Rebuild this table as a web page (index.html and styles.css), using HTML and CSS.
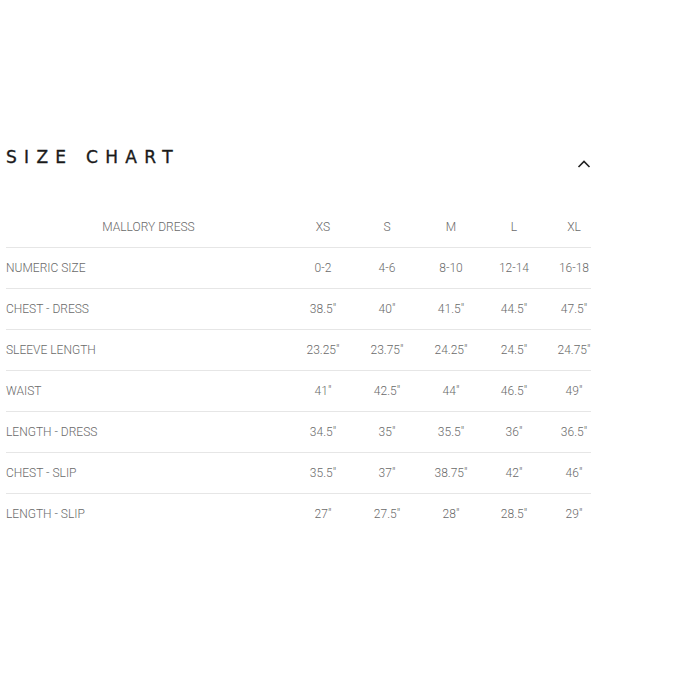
FILE: index.html
```html
<!DOCTYPE html>
<html>
<head>
<meta charset="utf-8">
<link rel="stylesheet" href="styles.css">
</head>
<body>
<div class="wrap">
  <div class="title-row">
    <h2 class="title">SIZE CHART</h2>
    <svg class="chev" width="14" height="9" viewBox="0 0 14 9"><polyline points="1.5,8 7,2.5 12.5,8" fill="none" stroke="#222" stroke-width="1.6"/></svg>
  </div>
  <div class="chart">
    <div class="row head">
      <div class="c name">MALLORY DRESS</div><div class="c">XS</div><div class="c">S</div><div class="c">M</div><div class="c">L</div><div class="c">XL</div>
    </div>
    <div class="row">
      <div class="c label">NUMERIC SIZE</div><div class="c">0-2</div><div class="c">4-6</div><div class="c">8-10</div><div class="c">12-14</div><div class="c">16-18</div>
    </div>
    <div class="row">
      <div class="c label">CHEST - DRESS</div><div class="c">38.5"</div><div class="c">40"</div><div class="c">41.5"</div><div class="c">44.5"</div><div class="c">47.5"</div>
    </div>
    <div class="row">
      <div class="c label">SLEEVE LENGTH</div><div class="c">23.25"</div><div class="c">23.75"</div><div class="c">24.25"</div><div class="c">24.5"</div><div class="c">24.75"</div>
    </div>
    <div class="row">
      <div class="c label">WAIST</div><div class="c">41"</div><div class="c">42.5"</div><div class="c">44"</div><div class="c">46.5"</div><div class="c">49"</div>
    </div>
    <div class="row">
      <div class="c label">LENGTH - DRESS</div><div class="c">34.5"</div><div class="c">35"</div><div class="c">35.5"</div><div class="c">36"</div><div class="c">36.5"</div>
    </div>
    <div class="row">
      <div class="c label">CHEST - SLIP</div><div class="c">35.5"</div><div class="c">37"</div><div class="c">38.75"</div><div class="c">42"</div><div class="c">46"</div>
    </div>
    <div class="row last">
      <div class="c label">LENGTH - SLIP</div><div class="c">27"</div><div class="c">27.5"</div><div class="c">28"</div><div class="c">28.5"</div><div class="c">29"</div>
    </div>
  </div>
</div>
</body>
</html>
```
FILE: styles.css
```css
html, body {
  margin: 0;
  padding: 0;
  background: #fff;
}
.wrap {
  width: 585px;
  padding: 147px 0 0 6px;
}
.title-row {
  display: flex;
  justify-content: space-between;
  align-items: flex-end;
  height: 20px;
}
.title {
  margin: 0;
  font-family: "DejaVu Sans", sans-serif;
  font-weight: normal;
  font-size: 17px;
  line-height: 20px;
  letter-spacing: 7.3px;
  color: #1a1a1a;
  -webkit-text-stroke: 0.35px #1a1a1a;
}
.chev {
  display: block;
  margin-bottom: -1px;
}
.chart {
  margin-top: 40px;
  font-family: "Roboto", sans-serif;
  font-weight: 300;
  font-size: 12px;
  color: #6a6a6a;
}
.row {
  display: grid;
  grid-template-columns: 285px 64px 64px 64px 62px 58px;
  height: 40px;
  align-items: center;
  border-bottom: 1px solid #e6e6e6;
}
.row.last {
  border-bottom: none;
}
.c {
  text-align: center;
  white-space: nowrap;
}
.c.label {
  text-align: left;
}
```
